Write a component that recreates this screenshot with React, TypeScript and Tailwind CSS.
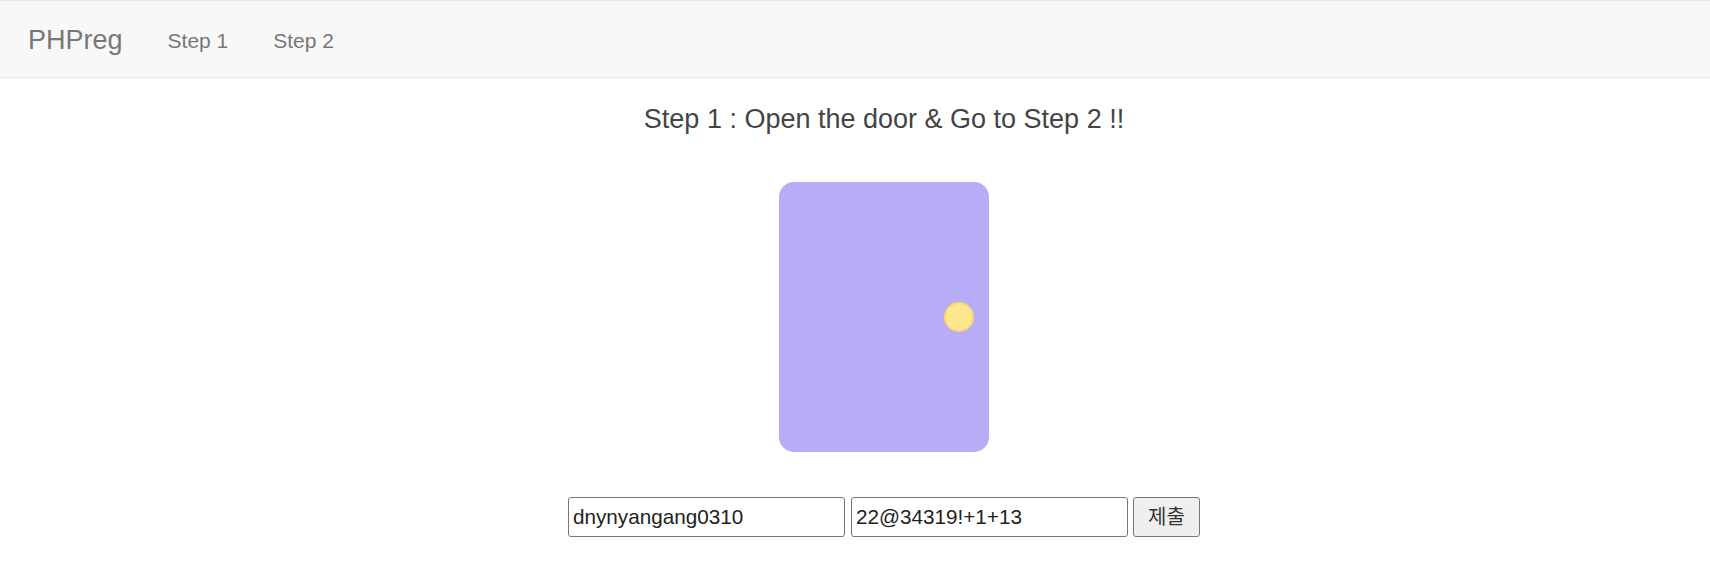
export default function App() {
  return (
    <div className="min-h-screen bg-white font-['Liberation_Sans','Noto_Sans_CJK_KR',sans-serif] text-[#333]">
      {/* top navbar */}
      <nav className="h-[78px] border-y border-[#e7e7e7] bg-[#f8f8f8]">
        <div className="flex items-start pl-[28px] pt-[24px]">
          <a className="text-[27px] leading-[30px] text-[#777]">PHPreg</a>
          <ul className="ml-[45px] flex gap-[45px] pt-[1px]">
            <li>
              <a className="text-[21px] leading-[30px] text-[#777]">Step 1</a>
            </li>
            <li>
              <a className="text-[21px] leading-[30px] text-[#777]">Step 2</a>
            </li>
          </ul>
        </div>
      </nav>

      <main className="flex flex-col items-center pl-[58px]">
        <h4 className="mt-[27px] text-[27px] leading-[29.7px] text-[#444]">
          Step 1 : Open the door &amp; Go to Step 2 !!
        </h4>

        {/* the door */}
        <div className="relative mt-[47px] h-[270px] w-[210px] rounded-[15px] bg-[#b9acf7]">
          <div className="absolute right-[15px] top-[120px] h-[30px] w-[30px] rounded-full border-2 border-[#f8d979] bg-[#fde68e]" />
        </div>

        <form className="mt-[45px] flex items-stretch gap-[6px]">
          <input
            type="text"
            defaultValue="dnynyangang0310"
            className="h-[40px] w-[277px] rounded-[3px] border border-[#767676] px-[4px] text-[20.7px] text-[#222] outline-none"
          />
          <input
            type="text"
            defaultValue="22@34319!+1+13"
            className="h-[40px] w-[277px] rounded-[3px] border border-[#767676] px-[4px] text-[20.7px] text-[#222] outline-none"
          />
          <button
            type="button"
            className="ml-[-1px] h-[40px] w-[67px] rounded-[3px] border border-[#767676] bg-[#efefef] text-[20px] text-[#333]"
          >
            제출
          </button>
        </form>
      </main>
    </div>
  );
}
